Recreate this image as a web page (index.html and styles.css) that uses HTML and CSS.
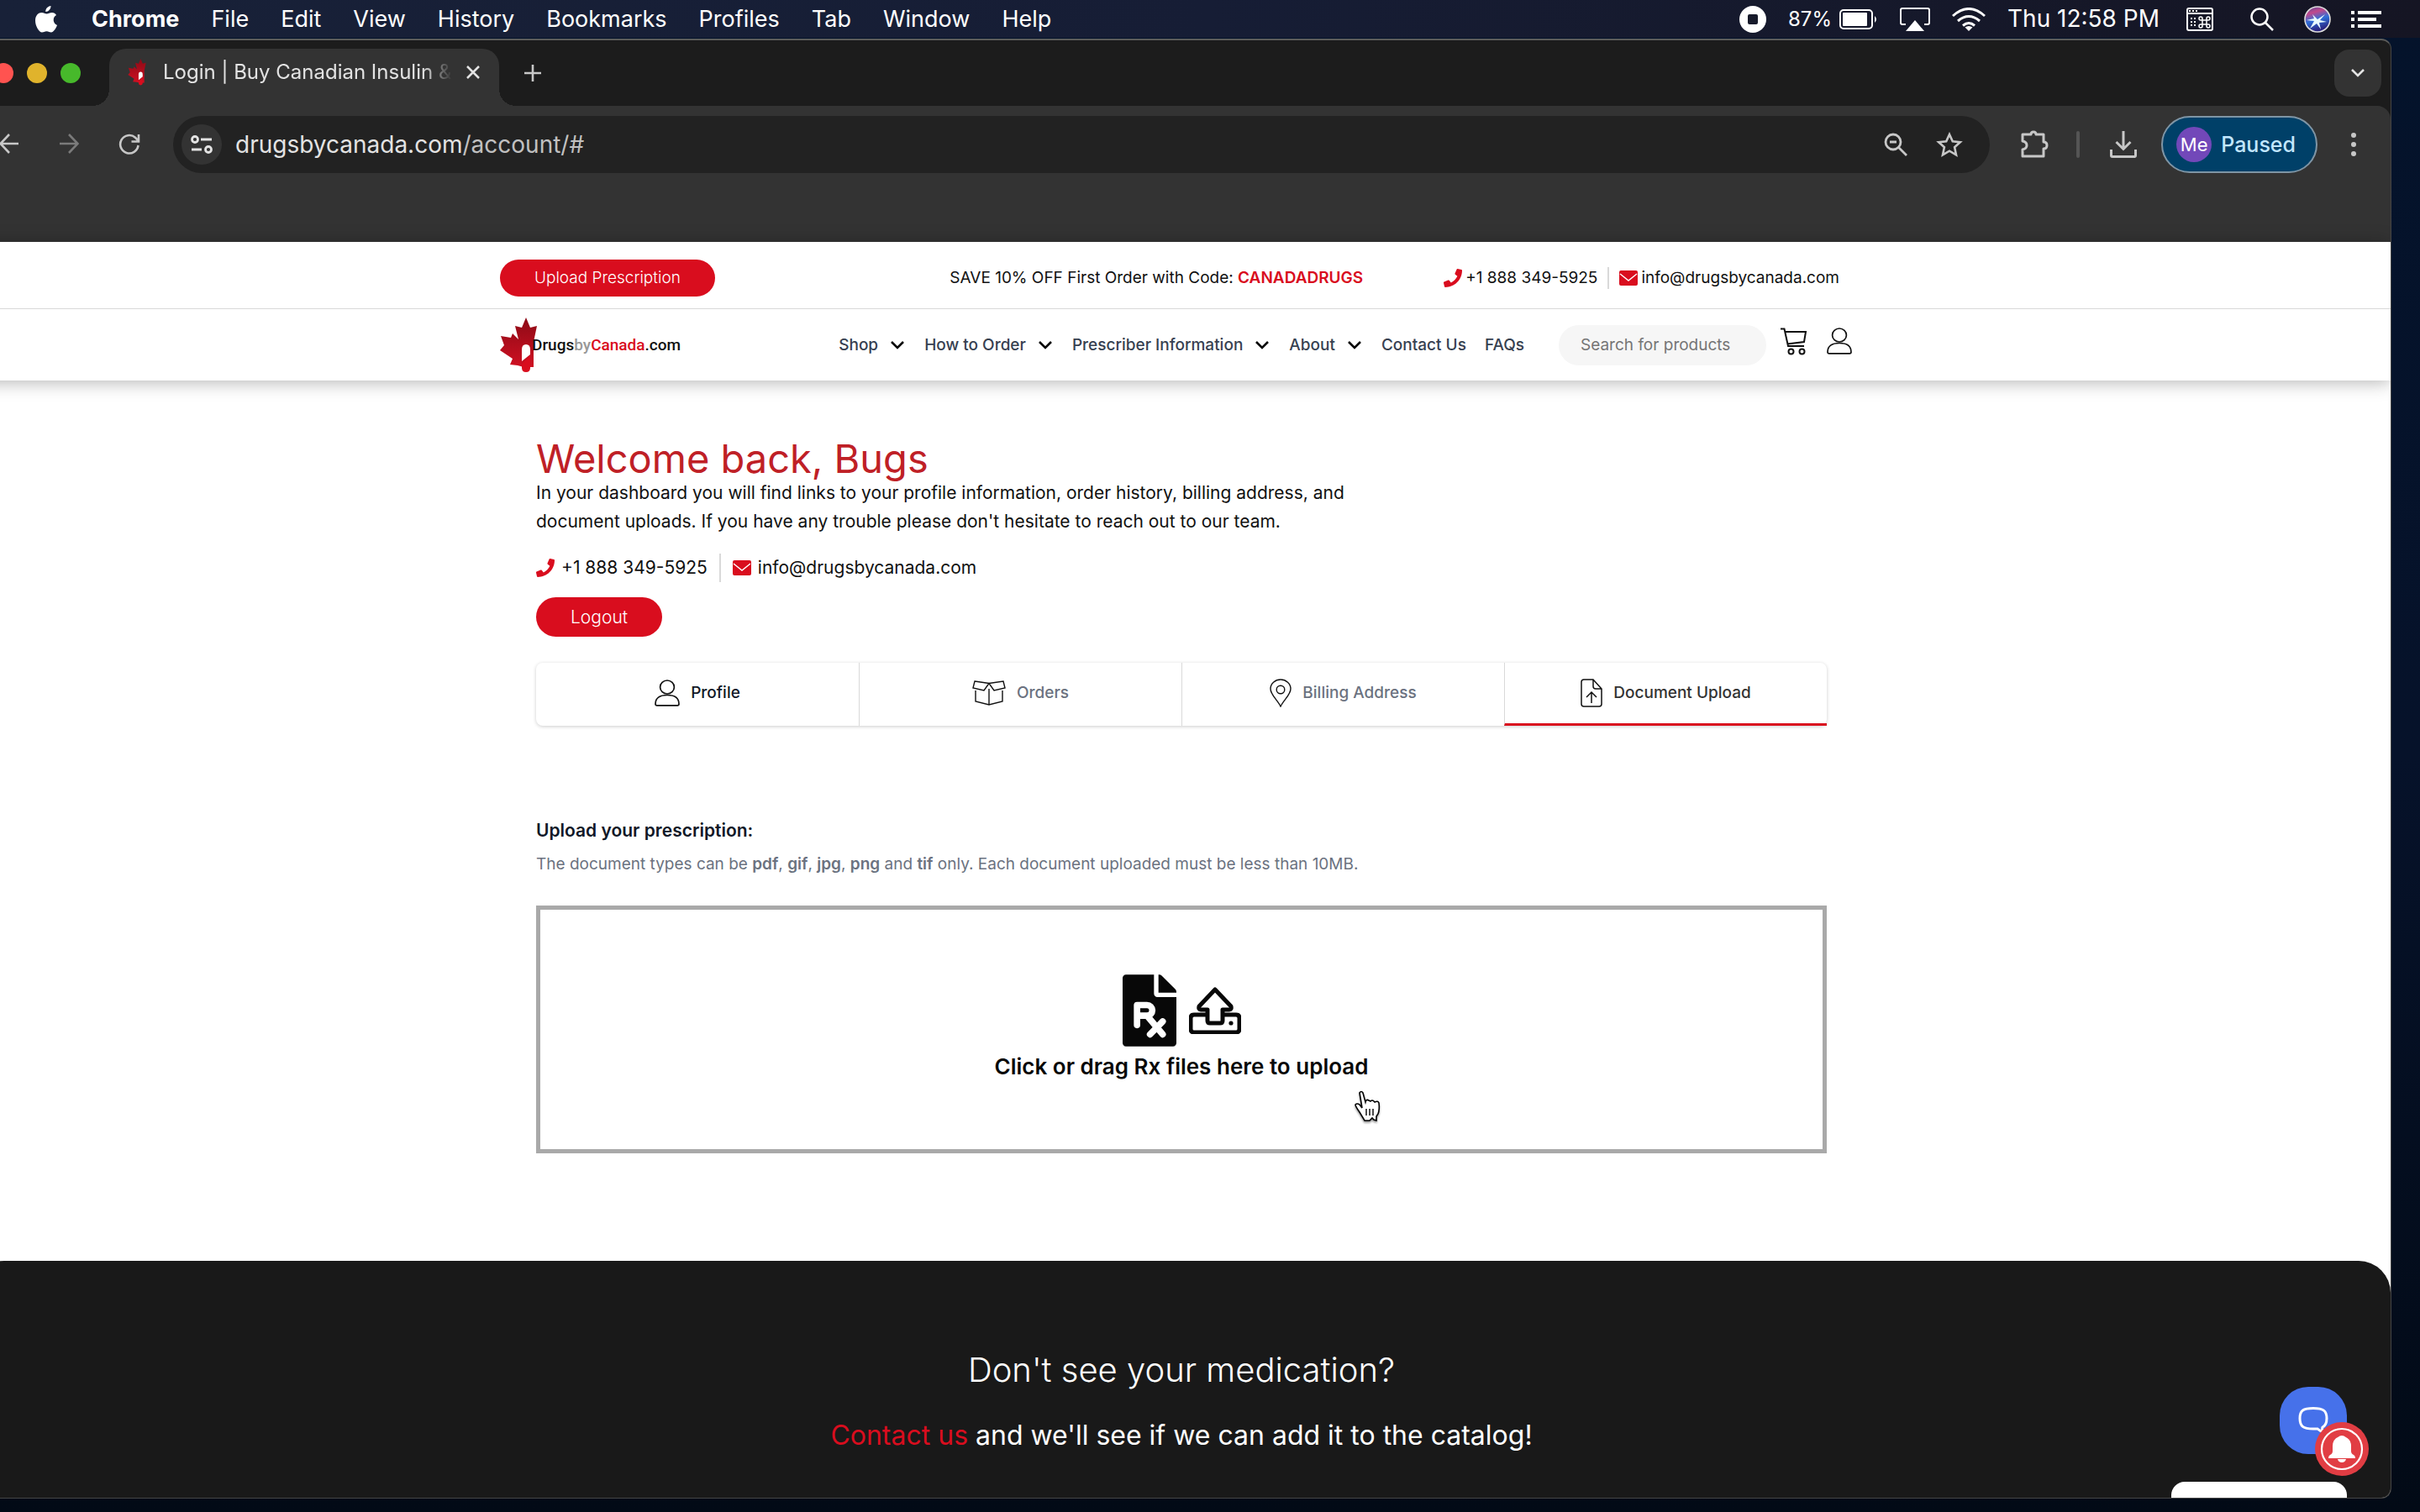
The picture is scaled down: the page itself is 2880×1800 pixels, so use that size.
FILE: index.html
```html
<!DOCTYPE html>
<html lang="en">
<head>
<meta charset="utf-8">
<title>Login | Buy Canadian Insulin</title>
<meta name="viewport" content="width=device-width,initial-scale=1">
<link rel="stylesheet" href="styles.css">
</head>
<body>
<!-- shared symbols -->
<svg class="defs" width="0" height="0" aria-hidden="true">
  <symbol id="i-phone" viewBox="0 0 512 512"><path d="M493 25 389 1c-11-3-23 3-27 14l-48 112c-4 10-1 22 7 29l61 50c-36 77-99 140-177 177l-50-61c-7-9-19-11-29-7L14 363c-11 5-17 16-14 28l24 104c2 10 12 17 23 17 256 0 465-207 465-464 0-11-8-21-19-23z"/></symbol>
  <symbol id="i-mail" viewBox="0 0 22 18"><rect width="22" height="18" rx="2"/><path d="m1 4 10 8 10-8" fill="none" stroke="#fff" stroke-width="1.4"/></symbol>
  <symbol id="i-chev" viewBox="0 0 16 10"><path d="m1 1 7 7 7-7" fill="none" stroke="currentColor" stroke-width="2.6"/></symbol>
  <symbol id="i-user" viewBox="0 0 30 32"><g fill="none" stroke="currentColor" stroke-width="1.7"><ellipse cx="15" cy="9" rx="8.4" ry="8"/><path d="M1 29c0-7 5-10.500 14-10.500S29 22 29 29c0 1.400-.600 1.800-1.800 1.800H2.800C1.600 30.800 1 30.400 1 29z"/></g></symbol>
  <symbol id="i-leaf" viewBox="0 0 44 66"><path fill="url(#leaf)" d="M31 0 36 12l8-2-4 19v30H28l-7-2-9-1 3-7L0 39l5-6-4-11 12 2 2-5 7 7-4-16 8 2z"/><path fill="#fff" d="M26 52V38q0-6 5-6 5 0 5 6v6z"/><path fill="#d90d1e" d="m26 56 10-11v15q0 5-5 5-5 0-5-5z"/></symbol>
  <linearGradient id="leaf" x1="0" y1="0" x2="0" y2="1"><stop offset="0" stop-color="#8c0a16"/><stop offset="1" stop-color="#cf1022"/></linearGradient>
</svg>

<nav class="menubar">
  <svg class="apple" viewBox="0 0 26 32" width="26" height="32"><path fill="#fff" d="M18.500 0c.300 3.500-2.800 7-6.200 7C12 3.500 15 .300 18.500 0zM25 11c-5 3-4 10 1 12-1.500 4-4.500 8.500-7 8.500-2.200 0-3-1.300-5.500-1.300s-3.500 1.300-5.500 1.300C4.500 31.500 0 24 0 17.500 0 11 4 8 7.500 8c2.500 0 4.200 1.600 6 1.600S17.200 8 20 8c2 0 4 1.200 5 3z"/></svg>
  <ul class="menus">
    <li class="app">Chrome</li><li>File</li><li>Edit</li><li>View</li><li>History</li><li>Bookmarks</li><li>Profiles</li><li>Tab</li><li>Window</li><li>Help</li>
  </ul>
  <div class="status">
    <svg viewBox="0 0 32 32" width="32" height="32"><circle cx="16" cy="16" r="16" fill="#fff"/><rect x="10" y="10" width="12" height="12" rx="2" fill="#171a2b"/></svg>
    <span class="battery">87%
      <svg viewBox="0 0 46 24" width="46" height="24"><rect x="1" y="1" width="38" height="22" rx="4" fill="none" stroke="#fff" stroke-width="2"/><rect x="4" y="4" width="29" height="16" rx="1" fill="#fff"/><path d="M42 8q4 4 0 8z" fill="#fff"/></svg>
    </span>
    <svg viewBox="0 0 36 28" width="36" height="28"><path d="M7 20H3q-2 0-2-2V3q0-2 2-2h30q2 0 2 2v15q0 2-2 2h-4" fill="none" stroke="#fff" stroke-width="2"/><path d="m18 15 11 13H7z" fill="#fff"/></svg>
    <svg viewBox="0 0 40 28" width="40" height="28"><g fill="none" stroke="#fff" stroke-width="3"><path d="M1 10Q20-7 39 10M7 16q13-11 26 0M13 21.500q7-6 14 0"/></g><path d="m20 28-4.500-4.500q4.500-3 9 0z" fill="#fff"/></svg>
    <span class="clock">Thu 12:58 PM</span>
    <svg viewBox="0 0 32 28" width="32" height="28"><rect x="1" y="1" width="30" height="26" rx="2" fill="none" stroke="#fff" stroke-width="2"/><path d="M3 3h2v2H3zm4 0h2v2H7zm4 0h2v2h-2zM1 6h30v2H1zM5 12h2v2H5zm4 0h2v2H9zm-4 4h2v2H5zm4 0h2v2H9zm-4 4h2v2H5zm4 0h2v2H9z" fill="#fff"/><path d="M19 15h5v5h-5zM19 15v-2a2 2 0 1 0-2 2zm5 0h2a2 2 0 1 0-2-2zm0 5v2a2 2 0 1 0 2-2zm-5 0h-2a2 2 0 1 0 2 2z" fill="none" stroke="#fff" stroke-width="1.500"/></svg>
    <svg class="spot" viewBox="0 0 28 28" width="28" height="28"><g fill="none" stroke="#fff" stroke-width="2.500"><circle cx="11" cy="11" r="9.500"/><path d="m18 18 9 9"/></g></svg>
    <svg class="siri" viewBox="0 0 32 32" width="32" height="32"><defs><linearGradient id="siri" x1="0" y1="0" x2=".3" y2="1"><stop offset="0" stop-color="#4a4a9c"/><stop offset=".3" stop-color="#c2488c"/><stop offset=".6" stop-color="#2f6fd8"/><stop offset="1" stop-color="#2a2480"/></linearGradient></defs><circle cx="16" cy="16" r="15" fill="url(#siri)" stroke="#ddd" stroke-width="1.600"/><path d="m16 16 9-6-6 7 8 2-9 1 2 8-5-7-8 6 5-9-9-1 9-2-2-5z" fill="#e8fbff"/></svg>
    <svg viewBox="0 0 36 22" width="36" height="22"><path d="M0 1h4v4H0zm8 0h28v4H8zM0 9h4v4H0zm8 0h22v4H8zM0 17h4v4H0zm8 0h28v4H8z" fill="#fff"/></svg>
  </div>
</nav>

<div class="window">
  <div class="tabstrip">
    <div class="lights"><i class="red"></i><i class="yellow"></i><i class="green"></i></div>
    <div class="tab">
      <svg class="favicon" width="22" height="32"><use href="#i-leaf"/></svg>
      <span class="tab-title">Login | Buy Canadian Insulin &amp;</span>
      <button class="plain" aria-label="Close tab"><svg viewBox="0 0 16 16" width="16" height="16"><path d="m1 1 14 14M15 1 1 15" stroke="#e3e3e3" stroke-width="2.500"/></svg></button>
    </div>
    <button class="plain" aria-label="New tab"><svg viewBox="0 0 20 20" width="20" height="20"><path d="M10 0v20M0 10h20" stroke="#c7c7c7" stroke-width="2.600"/></svg></button>
    <button class="tab-search" aria-label="Search tabs"><svg width="16" height="10"><use href="#i-chev"/></svg></button>
  </div>
  <div class="toolbar">
    <div class="history">
      <button class="plain" aria-label="Back"><svg viewBox="0 0 24 24" width="24" height="24"><path d="M23 12H2M12 1 1.500 12 12 23" fill="none" stroke="#c7c7c7" stroke-width="2.600"/></svg></button>
      <button class="plain" aria-label="Forward"><svg viewBox="0 0 24 24" width="24" height="24"><path d="M1 12h21M12 1l10.500 11L12 23" fill="none" stroke="#7a7a7a" stroke-width="2.600"/></svg></button>
      <button class="plain" aria-label="Reload"><svg viewBox="0 0 26 26" width="26" height="26"><path d="M23.500 14A10.700 10.700 0 1 1 20 4.800l3 3M24 1v8.500h-8.500" fill="none" stroke="#c7c7c7" stroke-width="2.600"/></svg></button>
    </div>
    <div class="omnibox">
      <span class="site"><svg viewBox="0 0 26 22" width="26" height="22"><g fill="none" stroke="#e3e3e3" stroke-width="2.800"><circle cx="5" cy="5" r="3.500"/><circle cx="21" cy="17" r="3.500"/><path d="M12 5h13M1 17h12"/></g></svg></span>
      <span class="url">drugsbycanada.com<span>/account/#</span></span>
      <svg viewBox="0 0 28 28" width="28" height="28"><g fill="none" stroke="#c7c7c7" stroke-width="2.800"><circle cx="11" cy="11" r="9"/><path d="m17 17 10 10M7 11h8"/></g></svg>
      <svg viewBox="0 0 32 30" width="32" height="30"><path d="m16 3 3.800 8.300 9 1-6.700 6 1.900 9L16 22.700 8 27.300l1.900-9-6.700-6 9-1z" fill="none" stroke="#c7c7c7" stroke-width="2.600"/></svg>
    </div>
    <svg class="puzzle" viewBox="0 0 34 34" width="34" height="34"><path d="M2 5h10q0-3 3-3t3 3h9v9q4 0 4 4t-4 4v9H2v-8q5-1 5-5t-5-5z" fill="none" stroke="#c7c7c7" stroke-width="3" stroke-linejoin="round"/></svg>
    <i class="bar"></i>
    <svg viewBox="0 0 32 32" width="32" height="32"><path d="M16 0v21M7.500 13l8.500 8.500 8.500-8.500M1.500 22v7q0 1.500 1.500 1.500h26q1.500 0 1.500-1.500v-7" fill="none" stroke="#c7c7c7" stroke-width="3"/></svg>
    <button class="profile"><span class="avatar">Me</span>Paused</button>
    <svg class="dots" viewBox="0 0 6 28" width="6" height="28"><g fill="#c7c7c7"><circle cx="3" cy="3" r="3"/><circle cx="3" cy="14" r="3"/><circle cx="3" cy="25" r="3"/></g></svg>
  </div>

  <div class="page">
    <header>
      <div class="promo">
        <div class="wrap">
          <button class="btn">Upload Prescription</button>
          <p>SAVE 10% OFF First Order with Code: <b>CANADADRUGS</b></p>
          <div class="contact">
            <a href="#"><svg width="22" height="22"><use href="#i-phone"/></svg>+1 888 349-5925</a>
            <a href="#"><svg width="22" height="18"><use href="#i-mail"/></svg>info@drugsbycanada.com</a>
          </div>
        </div>
      </div>
      <div class="mainbar wrap">
        <a class="logo" href="#"><svg width="44" height="66"><use href="#i-leaf"/></svg><span>Drugs<i>by</i><em>Canada</em>.com</span></a>
        <nav class="links">
          <a href="#">Shop <svg width="16" height="10"><use href="#i-chev"/></svg></a>
          <a href="#">How to Order <svg width="16" height="10"><use href="#i-chev"/></svg></a>
          <a href="#">Prescriber Information <svg width="16" height="10"><use href="#i-chev"/></svg></a>
          <a href="#">About <svg width="16" height="10"><use href="#i-chev"/></svg></a>
          <a href="#">Contact Us</a>
          <a href="#">FAQs</a>
        </nav>
        <input class="search" type="search" placeholder="Search for products" aria-label="Search for products">
        <div class="shop-icons">
          <a href="#" aria-label="Cart"><svg viewBox="0 0 32 33" width="32" height="33"><g fill="none" stroke="#111" stroke-width="2"><path d="M0 1.500h4.500L9 22h19M6 5h24l-2 12-20 2.500"/><circle cx="12.500" cy="28.500" r="3"/><circle cx="25.500" cy="28.500" r="3"/></g></svg></a>
          <a href="#" aria-label="Account"><svg width="30" height="32"><use href="#i-user"/></svg></a>
        </div>
      </div>
    </header>

    <main>
      <h1>Welcome back, Bugs</h1>
      <p class="intro">In your dashboard you will find links to your profile information, order history, billing address, and document uploads. If you have any trouble please don't hesitate to reach out to our team.</p>
      <div class="contact large">
        <a href="#"><svg width="22" height="22"><use href="#i-phone"/></svg>+1 888 349-5925</a>
        <a href="#"><svg width="22" height="18"><use href="#i-mail"/></svg>info@drugsbycanada.com</a>
      </div>
      <button class="btn logout">Logout</button>

      <nav class="tabs">
        <a class="profile-tab" href="#"><svg width="30" height="32"><use href="#i-user"/></svg>Profile</a>
        <a href="#"><svg viewBox="0 0 40 30" width="40" height="30"><path d="M4 12v13l16 4 16-4V12M20 10v19M3 1l17 2.500L37 1l2 8-13 3-6-8.500L14 12 1 9z" fill="none" stroke="#111" stroke-width="1.400"/></svg>Orders</a>
        <a href="#"><svg viewBox="0 0 26 34" width="26" height="34"><g fill="none" stroke="#111" stroke-width="1.400"><path d="M13 33C9 25 1 19 1 12a12 11 0 0 1 24 0c0 7-8 13-12 21z"/><circle cx="13" cy="13" r="4.800"/></g></svg>Billing Address</a>
        <a class="active" href="#"><svg viewBox="0 0 26 34" width="26" height="34"><path d="M4 1h11l10 11v18q0 3-3 3H4q-3 0-3-3V4q0-3 3-3zm11 0v8q0 3 3 3h7M13 29V16m-6 6 6-6 6 6" fill="none" stroke="#111" stroke-width="1.500"/></svg>Document Upload</a>
      </nav>

      <h2>Upload your prescription:</h2>
      <p class="types">The document types can be <b>pdf</b>, <b>gif</b>, <b>jpg</b>, <b>png</b> and <b>tif</b> only. Each document uploaded must be less than 10MB.</p>
      <button class="dropzone">
        <span class="drop-icons">
          <svg viewBox="0 0 384 512" width="64" height="86"><path fill="#080808" d="M224 136V0H24C11 0 0 11 0 24v464c0 13 11 24 24 24h336c13 0 24-11 24-24V160H248c-13 0-24-11-24-24zM384 122v6H256V0h6c6 0 12 3 17 7l98 98c4 5 7 11 7 17z"/><g fill="none" stroke="#fff" stroke-width="46" stroke-linecap="round" stroke-linejoin="round"><path d="M103 360V217h71a38 38 0 0 1 0 76h-70M180 300l106 126M286 334l-90 92"/></g></svg>
          <svg viewBox="0 0 62 56" width="62" height="56"><path d="M22 33H6q-4 0-4 4v13q0 4 4 4h50q4 0 4-4V37q0-4-4-4H40" fill="none" stroke="#080808" stroke-width="5"/><path d="m31 3 19 20q1 4-2 4h-8v13q0 3-3 3H25q-3 0-3-3V27h-8q-3 0-2-4z" fill="#fff" stroke="#080808" stroke-width="5" stroke-linejoin="round"/><circle cx="50" cy="43" r="2.600" fill="#080808"/></svg>
        </span>
        Click or drag Rx files here to upload
      </button>
    </main>

    <footer>
      <h2>Don't see your medication?</h2>
      <p><a href="#">Contact us</a> and we'll see if we can add it to the catalog!</p>
    </footer>
  </div>

  <button class="chat" aria-label="Open chat"><svg viewBox="0 0 36 32" width="36" height="32"><path d="M18 1.500c12 0 16 3 16 12 0 6-2 9-5 10.500-1 3 0 4 2 6-4-1-6-2-8-4H18c-12 0-16-3-16-12.500s4-12 16-12z" fill="none" stroke="#fff" stroke-width="3"/></svg></button>
  <button class="bell" aria-label="Notifications"><svg viewBox="0 0 64 64" width="64" height="64"><circle cx="32" cy="32" r="24" fill="none" stroke="#fff" stroke-width="2.200"/><path d="M32 16q3 0 4 1.500 7 3 7 11v6q0 3 3 4.500 2 1 2 4H16q0-3 2-4 3-1.500 3-4.500v-6q0-8 7-11 1-1.500 4-1.500zM27 44h10q-1 4-5 4t-5-4z" fill="#fff"/></svg></button>
  <div class="popup"></div>
</div>

<svg class="pointer" viewBox="0 0 32 38" width="32" height="38"><path d="M7 3q2-3 4 0l3 11q1-4 4-2l2 1q2-2 4 0l1 1q4-2 5 1 1 8-1 13l-2 3v5l-3-1-2-2-3 3h-6l-6-10q-5-7-5-9 2-2 5 0l3 4z" fill="#fff" stroke="#000" stroke-width="1.600"/><path d="M15 22v8m4-8v8m4-8v8" stroke="#000" stroke-width="1.400"/></svg>
</body>
</html>
```
FILE: styles.css
```css
:root{--red:#d90d1e;--ink:#111;--nav:#374151;--muted:#6b7280;--line:#d9d9d9}
*{box-sizing:border-box}
body{margin:0;min-height:100vh;overflow:hidden;background:linear-gradient(#04132b,#06122a 50%,#020a16);font-family:Inter,"Liberation Sans",sans-serif;color:var(--ink)}
h1,h2,p,ul{margin:0;padding:0;list-style:none}
a{color:inherit;text-decoration:none}
button,input{font:inherit;color:inherit;border:0;padding:0;background:none}
svg{display:block;flex:none}
.defs{position:absolute}
.plain{display:flex}

/* menu bar */
.menubar{display:flex;align-items:center;height:45px;padding:0 46px 0 42px;background:linear-gradient(90deg,#182138,#161d35 50%,#151523);color:#fff;font-size:27px;line-height:45px}
.apple{margin-right:41px}
.menus{display:flex;gap:38px}
.app{font-weight:700}
.status{display:flex;align-items:center;gap:26px;margin-left:auto}
.battery{display:flex;align-items:center;gap:9px;font-size:24px}
.clock{margin-right:6px;font-size:28px}
.spot{margin-left:18px}
.siri{margin:0 -2px 0 10px}

/* browser window, its left edge off screen */
.window{position:absolute;top:46px;right:34px;bottom:16px;left:-34px;display:flex;flex-direction:column;overflow:hidden;background:#1c1c1c;border:1px solid #454545;border-top:2px solid #5c5c5a;border-radius:12px}
.tabstrip{display:flex;align-items:center;height:78px;padding:0 11px 0 25px}
.lights{display:flex;gap:16px}
.lights i{width:24px;height:24px;border-radius:50%}
.red{background:#ff5350}
.yellow{background:#e0b32c}
.green{background:#47b92b}
.tab{position:relative;display:flex;align-items:center;align-self:flex-end;width:464px;height:68px;margin:0 30px 0 34px;padding:0 23px 12px 22px;background:#333;border-radius:20px 20px 0 0}
.tab::before,.tab::after{content:"";position:absolute;bottom:0;width:20px;height:20px}
.tab::before{right:100%;background:radial-gradient(circle at 0 0,transparent 20px,#333 20px)}
.tab::after{left:100%;background:radial-gradient(circle at 100% 0,transparent 20px,#333 20px)}
.tab-title{flex:1;margin:0 10px 0 20px;white-space:nowrap;color:#e3e3e3;font-size:24px;line-height:32px;-webkit-mask-image:linear-gradient(90deg,#000 88%,transparent 98%);mask-image:linear-gradient(90deg,#000 88%,transparent 98%)}
.tab-search{display:grid;place-items:center;width:56px;height:56px;margin-left:auto;border-radius:18px;background:#333;color:#e3e3e3}
.toolbar{display:flex;align-items:center;height:162px;padding:0 41px 70px 32px;background:#333;border-radius:0 16px 0 0}
.history{display:flex;gap:47px}
.omnibox{display:flex;flex:1;align-items:center;gap:34px;height:68px;margin:0 37px 0 39px;padding:0 32px 0 10px;border-radius:34px;background:#222}
.site{display:grid;place-items:center;width:48px;height:48px;border-radius:50%;background:#333}
.url{flex:1;margin-left:-18px;color:#e3e3e3;font-size:28px}
.url span{color:#c0c0c0}
.bar{width:4px;height:32px;margin:0 36px 0 32px;border-radius:2px;background:#555}
.profile{display:flex;align-items:center;gap:11px;height:68px;margin:0 40px 0 29px;padding:0 24px 0 16px;border:2px solid #7f95a5;border-radius:34px;background:#004068;color:#c2e7ff;font-size:25px;font-weight:500}
.avatar{width:42px;border-radius:50%;background:#7248b9;color:#fff;font-size:22px;font-weight:400;line-height:42px;text-align:center}

/* site header */
.page{display:flex;flex:1;flex-direction:column;min-height:0;background:#fff}
header{position:relative;background:#fff;box-shadow:0 2px 20px rgba(0,0,0,.3)}
.wrap{width:100%;max-width:1672px;margin:0 auto;padding:0 25px}
.promo{border-bottom:1px solid var(--line);font-size:19px;line-height:44px}
.promo .wrap{display:flex;align-items:center;height:79px;padding:6px 53px 0 25px}
.promo p{margin:0 96px 0 auto}
.promo b{color:var(--red);font-weight:600}
.btn{padding:0 41px;border-radius:24px;background:var(--red);color:#fff;font-weight:300;cursor:pointer}
.contact{display:flex}
.contact a{display:flex;align-items:center;gap:4px;line-height:26px}
.contact svg{fill:var(--red)}
.contact a+a{margin-left:12px;padding-left:12px;border-left:2px solid var(--line)}
.mainbar{display:flex;align-items:center;height:85px}
.logo{display:flex;align-items:center;font-family:Roboto,sans-serif;font-size:19px;font-weight:500}
.logo span{margin-left:-6px}
.logo i{color:#999;font-style:normal}
.logo em{color:var(--red);font-style:normal}
.links{display:flex;gap:24px;margin-left:auto;color:var(--nav);font-size:19px;font-weight:500}
.links a{display:flex;align-items:center;gap:15px}
.links svg{color:#000}
.links a:last-child{margin-left:-2px}
.search{width:247px;height:48px;margin:0 17px 0 41px;padding:0 26px;border-radius:24px;background:#f6f6f6;font-size:19px}
.search::placeholder{color:#757575}
.shop-icons{display:flex;gap:23px;padding:0 13px 8px 0}

/* account page */
main{width:100%;max-width:1536px;margin:0 auto;padding:69px 0 128px;font-size:21px;line-height:34px}
h1{color:#bf2026;font-size:47px;font-weight:400;line-height:48px}
.intro{max-width:1000px}
.large{margin:21px 0 18px}
.large a{gap:8px;line-height:34px}
.large a+a{margin-left:14px;padding-left:14px}
.logout{display:block;height:47px}
.tabs{display:grid;grid-template-columns:repeat(4,1fr);height:75px;margin:31px 0 108px;border-radius:8px;box-shadow:0 1px 4px rgba(0,0,0,.2);color:var(--muted);font-size:19px;font-weight:500}
.tabs a{display:flex;align-items:center;justify-content:center;gap:13px;padding-bottom:3px}
.tabs a+a{border-left:1px solid var(--line)}
.tabs svg{color:#111}
.profile-tab{color:#111827}
.tabs .active{padding:0;border-bottom:3px solid var(--red);color:#333}
main h2{color:#111827;font-size:21px;font-weight:600}
.types{margin:9px 0 35px;color:var(--muted);font-size:19px;line-height:28px}
.types b{font-weight:600}
.dropzone{display:flex;flex-direction:column;align-items:center;width:100%;height:295px;padding-top:77px;border:5px solid #a9a9a9;background:#fff;color:#080808;font-size:26px;font-weight:600;line-height:34px;cursor:pointer}
.drop-icons{display:flex;align-items:center;gap:15px;height:86px;margin-bottom:7px}

/* footer */
footer{flex:1;padding:106px 0 0;border-radius:38px 38px 0 0;background:#191919;color:#fff;text-align:center;line-height:48px}
footer h2{margin-bottom:30px;font-size:40px;font-weight:300}
footer p{font-size:32px}
footer a{color:var(--red)}

/* floating widgets */
.chat{position:absolute;right:52px;bottom:52px;display:grid;place-items:center;width:80px;height:80px;border-radius:34px;background:#4671ea}
.bell{position:absolute;right:26px;bottom:26px;border-radius:50%;background:#e13d43}
.popup{position:absolute;right:52px;bottom:-1px;width:209px;height:20px;border-radius:16px 16px 0 0;background:#fff}
.pointer{position:absolute;top:1298px;left:1611px;filter:drop-shadow(0 2px 1px rgba(0,0,0,.4))}
```
